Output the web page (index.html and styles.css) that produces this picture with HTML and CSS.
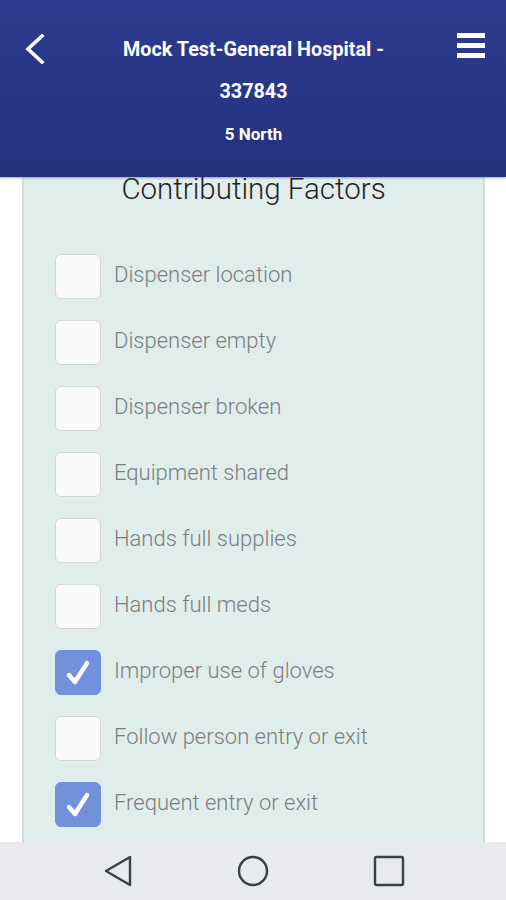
FILE: index.html
```html
<!DOCTYPE html>
<html>
<head>
<meta charset="utf-8">
<link rel="stylesheet" href="styles.css">
</head>
<body>
<div class="screen">
  <header class="appbar">
    <div class="appbar-row">
      <svg class="back" width="24" height="30" viewBox="0 0 24 30"><path d="M19 2 L5 15 L19 28" fill="none" stroke="#fff" stroke-width="3.6" stroke-linecap="square"/></svg>
      <div class="titles">
        <div class="t1">Mock Test-General Hospital -</div>
        <div class="t2">337843</div>
        <div class="t3">5 North</div>
      </div>
      <svg class="menu" width="30" height="28" viewBox="0 0 30 28"><rect x="1" y="1" width="28" height="5" fill="#fff"/><rect x="1" y="11" width="28" height="5" fill="#fff"/><rect x="1" y="21" width="28" height="5" fill="#fff"/></svg>
    </div>
  </header>
  <main class="content">
    <section class="card">
      <h1 class="card-title">Contributing Factors</h1>
      <ul class="list">
        <li class="item"><span class="box"></span><span class="label">Dispenser location</span></li>
        <li class="item"><span class="box"></span><span class="label">Dispenser empty</span></li>
        <li class="item"><span class="box"></span><span class="label">Dispenser broken</span></li>
        <li class="item"><span class="box"></span><span class="label">Equipment shared</span></li>
        <li class="item"><span class="box"></span><span class="label">Hands full supplies</span></li>
        <li class="item"><span class="box"></span><span class="label">Hands full meds</span></li>
        <li class="item"><span class="box checked"><svg width="32" height="32" viewBox="0 0 32 32"><path d="M7 18 L13 25 L25 6" fill="none" stroke="#fff" stroke-width="4.4" stroke-linecap="round" stroke-linejoin="round"/></svg></span><span class="label">Improper use of gloves</span></li>
        <li class="item"><span class="box"></span><span class="label">Follow person entry or exit</span></li>
        <li class="item"><span class="box checked"><svg width="32" height="32" viewBox="0 0 32 32"><path d="M7 18 L13 25 L25 6" fill="none" stroke="#fff" stroke-width="4.4" stroke-linecap="round" stroke-linejoin="round"/></svg></span><span class="label">Frequent entry or exit</span></li>
      </ul>
    </section>
  </main>
  <nav class="sysnav">
    <svg width="30" height="32" viewBox="0 0 30 32"><path d="M27 2 L3 16 L27 30 Z" fill="none" stroke="#3c4043" stroke-width="2.4" stroke-linejoin="round"/></svg>
    <svg width="32" height="32" viewBox="0 0 32 32"><circle cx="16" cy="16" r="14" fill="none" stroke="#3c4043" stroke-width="2.4"/></svg>
    <svg width="32" height="32" viewBox="0 0 32 32"><rect x="2" y="2" width="28" height="28" rx="1.5" fill="none" stroke="#3c4043" stroke-width="2.4"/></svg>
  </nav>
</div>
</body>
</html>
```
FILE: styles.css
```css
* { box-sizing: border-box; }
html, body { margin: 0; padding: 0; background: #fff; }
body { font-family: Roboto, "Liberation Sans", sans-serif; }
.screen {
  width: 506px;
  height: 900px;
  display: flex;
  flex-direction: column;
  overflow: hidden;
}
.appbar {
  height: 177px;
  flex: none;
  background: linear-gradient(#2e3b8e, #25317f);
  box-shadow: 0 1px 2px rgba(0,0,0,0.35);
  position: relative;
  z-index: 2;
}
.appbar-row {
  display: flex;
  align-items: flex-start;
  justify-content: space-between;
  padding: 32px 20px 0 23px;
}
.back { margin-top: 2px; }
.titles {
  flex: 1;
  display: flex;
  flex-direction: column;
  align-items: center;
  color: #fff;
  font-weight: 700;
  padding-left: 4px;
}
.t1, .t2 { font-size: 19.8px; line-height: 42px; }
.t1 { margin-top: -3px; }
.t3 { font-size: 17px; line-height: 20px; margin-top: 11px; }
.content {
  flex: 1;
  overflow: hidden;
  padding: 0 21px 0 22px;
}
.card {
  background: #dfeeeb;
  border-left: 2px solid #d6dbda;
  border-right: 2px solid #d6dbda;
  height: 100%;
  padding: 0 0 0 31px;
}
.card-title {
  margin: 0 0 0 -31px;
  text-align: center;
  font-size: 29.5px;
  line-height: 24px;
  font-weight: 300;
  color: #1f1f1f;
}
.list {
  list-style: none;
  margin: 53px 0 0;
  padding: 0;
  display: flex;
  flex-direction: column;
  gap: 21px;
}
.item {
  display: flex;
  align-items: center;
  gap: 13px;
  height: 45px;
}
.box {
  width: 46px;
  height: 45px;
  flex: none;
  border-radius: 6px;
  background: #fafafa;
  border: 1px solid #d3d6d6;
  display: flex;
  align-items: center;
  justify-content: center;
}
.box.checked {
  background: #7390dc;
  border-color: #7390dc;
}
.label {
  font-size: 22px;
  font-weight: 300;
  color: #7a7e7e;
  margin-top: -4px;
}
.sysnav {
  height: 58px;
  flex: none;
  background: #e8eaed;
  display: flex;
  align-items: center;
  justify-content: center;
  gap: 104px;
  padding-left: 2px;
}
```
